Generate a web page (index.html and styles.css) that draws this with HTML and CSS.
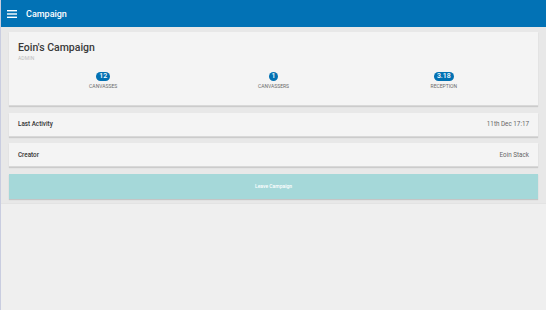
FILE: index.html
```html
<!DOCTYPE html>
<html lang="en">
<head>
  <meta charset="UTF-8">
  <title>Campaign</title>
  <link rel="stylesheet" href="styles.css">
</head>
<body>

  <!-- Barre du haut -->
  <header class="toolbar">
    <svg class="menu-icon" width="10" height="8" viewBox="0 0 10 8">
      <rect x="0" y="0" width="10" height="1.4" fill="#fff"/>
      <rect x="0" y="3.3" width="10" height="1.4" fill="#fff"/>
      <rect x="0" y="6.6" width="10" height="1.4" fill="#fff"/>
    </svg>
    <span class="toolbar-title">Campaign</span>
  </header>

  <div class="content">
    <div class="wrap">

      <!-- Résumé -->
      <div class="card summary">
        <h1>Eoin's Campaign</h1>
        <div class="role">ADMIN</div>
        <div class="stats">
          <div class="stat">
            <span class="badge">12</span>
            <span class="stat-label">CANVASSES</span>
          </div>
          <div class="stat">
            <span class="badge">1</span>
            <span class="stat-label">CANVASSERS</span>
          </div>
          <div class="stat">
            <span class="badge">3.18</span>
            <span class="stat-label">RECEPTION</span>
          </div>
        </div>
      </div>

      <div class="card row">
        <span class="row-label">Last Activity</span>
        <span class="row-value">11th Dec 17:17</span>
      </div>

      <div class="card row">
        <span class="row-label">Creator</span>
        <span class="row-value">Eoin Stack</span>
      </div>

      <button class="leave-button">Leave Campaign</button>
    </div>
  </div>

</body>
</html>
```

FILE: styles.css
```css
body {
  margin: 0;
  font-family: Roboto, "Noto Sans", sans-serif;
  background: #efefef;
  color: #333;
  height: 310px;
  border-left: 1px solid #c9cde0;
  box-sizing: border-box;
}

.toolbar {
  height: 27px;
  background: #0272b5;
  display: flex;
  align-items: center;
  padding-left: 7px;
  margin-left: -1px;
}

.menu-icon {
  margin-right: 9px;
}

.toolbar-title {
  color: #fff;
  font-size: 9px;
  font-weight: 500;
}

.content {
  background: #e8e8e8;
  padding: 5px 8px 4px 8px;
  border-bottom: 1px solid #e3e3e3;
}

.wrap {
  display: flex;
  flex-direction: column;
  gap: 6.5px;
}

.card {
  background: #f4f4f4;
  box-shadow: 0 1px 1px rgba(0, 0, 0, 0.12);
  border-bottom: 1px solid #d8d8d8;
}

.summary {
  padding: 9px 9px 0 9px;
  height: 64px;
}

.summary h1 {
  margin: 0;
  font-size: 10.5px;
  font-weight: 500;
  color: #3a3a3a;
  line-height: 13px;
}

.role {
  font-size: 5px;
  color: #bcbcbc;
  margin-top: 1px;
  letter-spacing: 0.1px;
}

.stats {
  display: grid;
  grid-template-columns: 1fr 1fr 1fr;
  margin-top: 11px;
}

.stat {
  display: flex;
  flex-direction: column;
  align-items: center;
}

.badge {
  background: #0271b3;
  color: #fff;
  font-size: 7px;
  font-weight: 500;
  line-height: 9px;
  height: 9px;
  min-width: 9px;
  padding: 0 3px;
  border-radius: 5px;
  text-align: center;
  box-sizing: border-box;
}

.stat-label {
  font-size: 5px;
  color: #6a6a6a;
  margin-top: 2px;
}

.row {
  height: 23px;
  display: flex;
  align-items: center;
  justify-content: space-between;
  padding: 0 9px;
  font-size: 6.3px;
}

.row-label {
  color: #333;
  font-weight: 500;
}

.row-value {
  color: #666;
}

.leave-button {
  height: 25px;
  border: none;
  background: #a5d8d9;
  color: #fff;
  font-family: Roboto, sans-serif;
  font-size: 5px;
  font-weight: 500;
  box-shadow: 0 1px 1px rgba(0, 0, 0, 0.15);
  padding: 0;
}
```
